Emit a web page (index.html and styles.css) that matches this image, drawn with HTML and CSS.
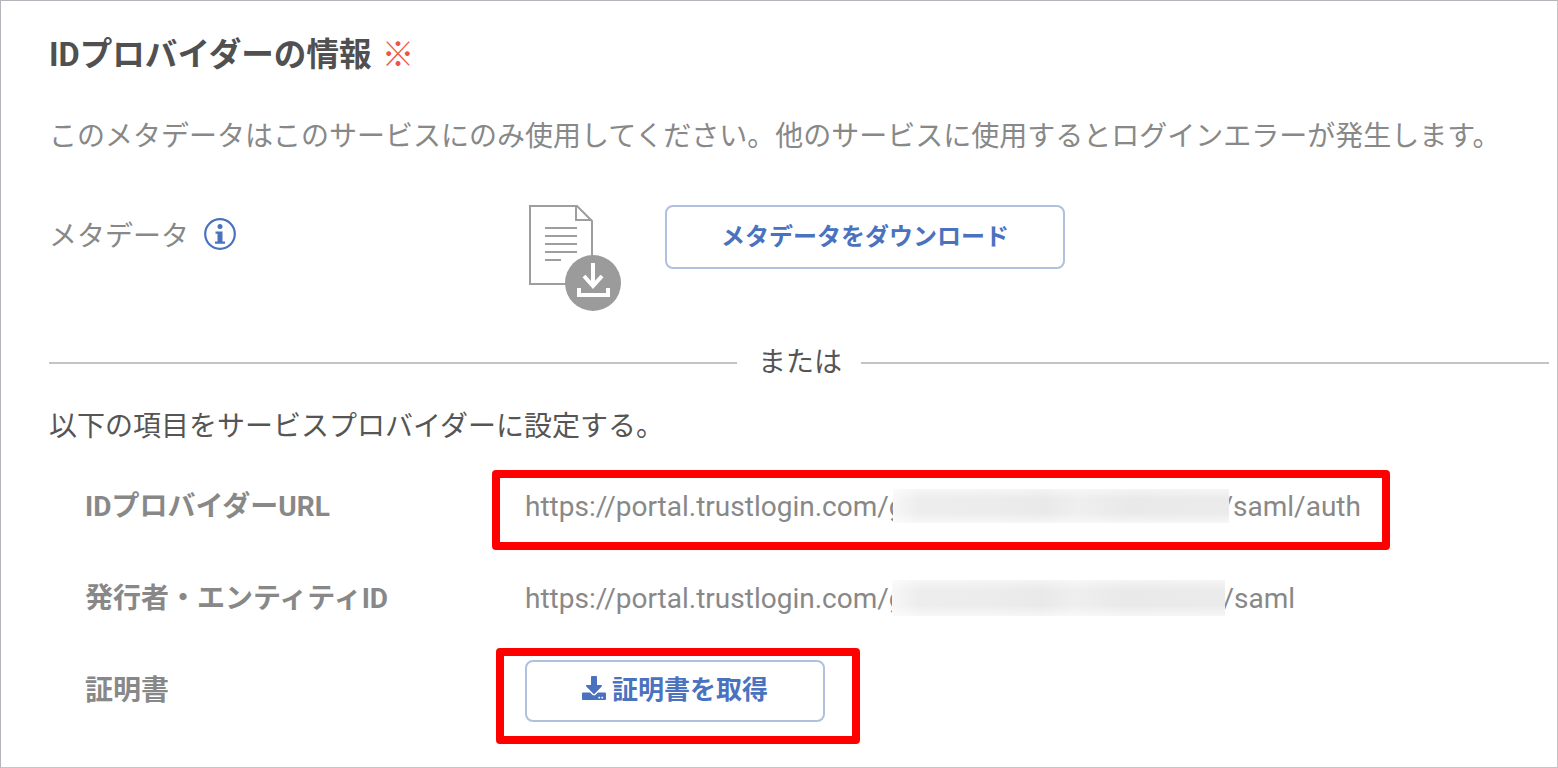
FILE: index.html
```html
<!DOCTYPE html>
<html lang="ja">
<head>
<meta charset="utf-8">
<title>IDプロバイダーの情報</title>
<link rel="stylesheet" href="styles.css">
</head>
<body>
<main class="frame">
  <h2 class="title">IDプロバイダーの情報 <span class="req">※</span></h2>
  <p class="note">このメタデータはこのサービスにのみ使用してください。他のサービスに使用するとログインエラーが発生します。</p>
  <section class="meta">
    <div class="meta-label">メタデータ
      <svg class="info" viewBox="0 0 32 32" width="32" height="32"><circle cx="16" cy="16" r="14.8" fill="none" stroke="#4a72bf" stroke-width="2.2"/><circle cx="16" cy="8.500" r="2.500" fill="#4a72bf"/><path d="M11.500 13.500h7v10h2.500v2.300H11V23.500h2.500v-7.700h-2z" fill="#4a72bf"/></svg>
    </div>
    <svg class="doc" viewBox="0 0 94 107" width="94" height="107">
      <path d="M1 1h47l15 15v63H1z" fill="#fff" stroke="#9e9e9e" stroke-width="2"/>
      <path d="M47 1v14h16" fill="none" stroke="#9e9e9e" stroke-width="2"/>
      <path d="M16 23h32M16 31h32M16 39h32M16 47h32M16 55h16" stroke="#9e9e9e" stroke-width="2" fill="none"/>
      <circle cx="64" cy="78" r="28" fill="#9b9b9b"/>
      <path d="M64 58v22M55 71l9 10 9-10M50 83v7h29v-7" fill="none" stroke="#fff" stroke-width="4"/>
    </svg>
    <button class="btn btn-meta">メタデータをダウンロード</button>
  </section>
  <div class="divider"><span>または</span></div>
  <p class="lead">以下の項目をサービスプロバイダーに設定する。</p>
  <dl class="fields">
    <div class="field">
      <dt>IDプロバイダーURL</dt>
      <dd>https://portal.trustlogin.com/g<span class="blur blur-a"></span>/saml/auth</dd>
    </div>
    <div class="field">
      <dt>発行者・エンティティID</dt>
      <dd>https://portal.trustlogin.com/g<span class="blur blur-b"></span>/saml</dd>
    </div>
    <div class="field">
      <dt>証明書</dt>
      <dd><button class="btn btn-cert"><svg viewBox="0 0 512 512" width="24" height="24"><path fill="#4a72bf" d="M216 0h80c13.300 0 24 10.700 24 24v168h87.700c17.800 0 26.700 21.500 14.100 34.100L269.700 378.300c-7.500 7.500-19.800 7.500-27.300 0L90.100 226.100c-12.600-12.600-3.700-34.100 14.100-34.100H192V24c0-13.300 10.700-24 24-24zm296 376v112c0 13.300-10.700 24-24 24H24c-13.300 0-24-10.700-24-24V376c0-13.300 10.700-24 24-24h146.700l49 49c20.100 20.100 52.500 20.100 72.600 0l49-49H488c13.300 0 24 10.700 24 24zm-124 88c0-11-9-20-20-20s-20 9-20 20 9 20 20 20 20-9 20-20zm64 0c0-11-9-20-20-20s-20 9-20 20 9 20 20 20 20-9 20-20z"/></svg>証明書を取得</button></dd>
    </div>
  </dl>
  <div class="mark mark-url"></div>
  <div class="mark mark-cert"></div>
</main>
</body>
</html>
```
FILE: styles.css
```css
* { box-sizing: border-box; }
html, body { margin: 0; height: 100%; background: #fff; }
body { font-family: Roboto, "Noto Sans CJK JP", sans-serif; overflow: hidden; }
.frame { position: relative; width: 1558px; height: 768px; border: 1px solid #b4b4ba; border-right-color: #c4c4c4; border-bottom-color: #c4c4c4; padding: 0 8px 0 48px; }
.title { margin: 33px 0 0; font-size: 32.6px; line-height: 42px; font-weight: 700; color: #505050; }
.req { margin-left: 2px; color: #ee5544; font-weight: 400; }
.note { margin: 41px 0 0; font-size: 28px; line-height: 40px; color: #888; white-space: nowrap; }
.meta { display: flex; align-items: flex-start; margin-top: 48px; height: 112px; }
.meta-label { width: 480px; display: flex; align-items: flex-start; gap: 15px; font-size: 28px; line-height: 32px; margin-top: 16px; color: #888; }
.info { margin-top: -3px; }
.doc { display: block; }
.btn { display: inline-flex; align-items: center; justify-content: center; background: #fff; border: 2px solid #b0c0de; border-radius: 8px; color: #4a72bf; font-family: inherit; font-size: 24px; font-weight: 700; padding: 0 0 6px; }
.btn-meta { width: 400px; height: 64px; margin-left: 42px; }
.divider { display: flex; align-items: center; margin-top: 26px; font-size: 28px; line-height: 40px; color: #555; }
.divider span { margin: 0 19px 0 21px; }
.divider::before { content: ""; width: 688px; height: 2px; background: #c4c4c4; }
.divider::after { content: ""; flex: 1; height: 2px; background: #c4c4c4; }
.lead { margin: 24px 0 0; font-size: 28px; line-height: 40px; color: #555; }
.fields { margin: 13px 0 0; padding-left: 36px; }
.field { display: flex; align-items: center; height: 92px; }
.field dt { width: 440px; padding-bottom: 4px; font-size: 28px; font-weight: 700; color: #888; white-space: nowrap; }
.field dd { margin: 0; font-size: 28px; color: #888; white-space: nowrap; display: flex; align-items: center; }
.blur { display: inline-block; z-index: 1; height: 34px;
  background:
    linear-gradient(180deg, rgba(255,255,255,.5), rgba(255,255,255,0) 30%, rgba(255,255,255,0) 70%, rgba(255,255,255,.6)),
    linear-gradient(90deg, #f7f7f7, #ededed 8%, #ececec 30%, #e9e9e9 45%, #efefef 55%, #e9e9e9 70%, #ebebeb 100%); }
.blur-a { width: 336px; margin: 0 -7px 0 -12px; }
.blur-b { width: 333px; height: 36px; margin: 0 -2px 0 -13px; }
.btn-cert { width: 300px; height: 62px; margin-top: 1px; gap: 6px; font-size: 26px; }
.mark { position: absolute; border: 8px solid #f00; border-radius: 4px; }
.mark-url { left: 491px; top: 469px; width: 898px; height: 80px; }
.mark-cert { left: 495px; top: 647px; width: 364px; height: 96px; }
```
